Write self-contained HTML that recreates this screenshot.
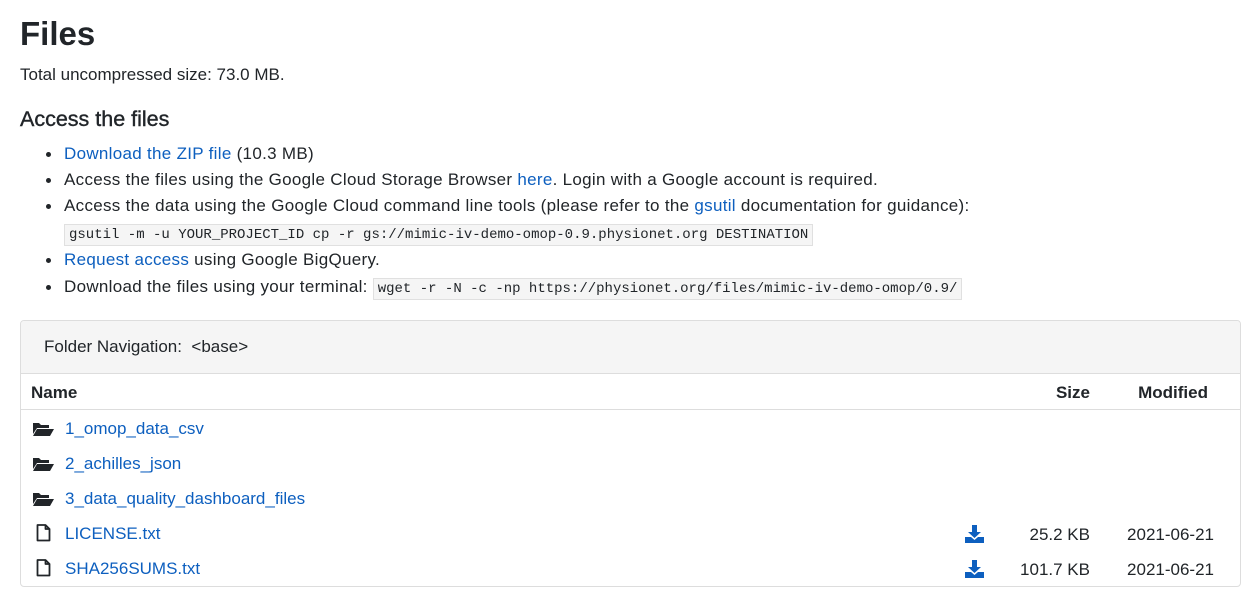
<!DOCTYPE html>
<html><head><meta charset="utf-8"><style>
*{margin:0;padding:0;box-sizing:border-box}
body{width:1251px;height:597px;background:#fff;font-family:"Liberation Sans",sans-serif;color:#212529;font-size:17px;position:relative;overflow:hidden}
.a{position:absolute;white-space:nowrap}
a{color:#0d5fbf;text-decoration:none}
h1{position:absolute;left:20px;top:13px;font-size:33px;font-weight:bold;line-height:42px}
h2{position:absolute;left:20px;top:106px;font-size:21.5px;font-weight:normal;line-height:26px;-webkit-text-stroke:0.4px #212529}
.li{position:absolute;left:64px;white-space:nowrap;line-height:20px;letter-spacing:0.3px}
.li:before{content:"";position:absolute;left:-18px;top:8px;width:5px;height:5px;border-radius:50%;background:#212529}
code{font-family:"Liberation Mono",monospace;font-size:14px;background:#f5f5f5;border:1px solid #e0e0e0;padding:2px 4px;color:#212529;letter-spacing:0}
.card{position:absolute;left:20px;top:320px;width:1221px;height:267px;border:1px solid #ddd;border-radius:4px;overflow:hidden}
.hd{height:53px;background:#f5f5f5;border-bottom:1px solid #ddd;padding:17px 0 0 23px;line-height:18px}
.th{position:absolute;top:53px;left:0;right:0;height:36px;border-bottom:1px solid #ddd;font-weight:bold;font-size:17px}
.row{position:absolute;left:0;right:0;height:35px}
.row a{position:absolute;left:44px;top:8px;font-size:17px}
.fold{position:absolute;left:12px;top:11px}
.file{position:absolute;left:15px;top:8px}
.dl{position:absolute;left:944px;top:9px}
.sz{position:absolute;right:150px;top:9px}
.dt{position:absolute;right:26px;top:9px}
</style></head><body>
<h1>Files</h1>
<div class="a" style="left:20px;top:65px;line-height:20px">Total uncompressed size: 73.0 MB.</div>
<h2>Access the files</h2>
<div class="li" style="top:144px"><a>Download the ZIP file</a> (10.3 MB)</div>
<div class="li" style="top:170px">Access the files using the Google Cloud Storage Browser <a>here</a>. Login with a Google account is required.</div>
<div class="li" style="top:196px">Access the data using the Google Cloud command line tools (please refer to the <a>gsutil</a> documentation for guidance):</div>
<div class="a" style="left:64px;top:223px"><code>gsutil -m -u YOUR_PROJECT_ID cp -r gs://mimic-iv-demo-omop-0.9.physionet.org DESTINATION</code></div>
<div class="li" style="top:250px"><a>Request access</a> using Google BigQuery.</div>
<div class="li" style="top:277px">Download the files using your terminal: <code>wget -r -N -c -np https://physionet.org/files/mimic-iv-demo-omop/0.9/</code></div>
<div class="card">
<div class="hd">Folder Navigation: &nbsp;&lt;base&gt;</div>
<div class="th"><span class="a" style="left:10px;top:9px">Name</span><span class="a" style="right:150px;top:9px">Size</span><span class="a" style="right:32px;top:9px">Modified</span></div>
<div class="row" style="top:90px"><svg class="fold" width="21" height="14" viewBox="0 0 21 14"><path d="M0 1h6l2 2h8v3H4L0 12z M4 7h17l-4 7H0z" fill="#212529"/></svg><a>1_omop_data_csv</a></div>
<div class="row" style="top:125px"><svg class="fold" width="21" height="14" viewBox="0 0 21 14"><path d="M0 1h6l2 2h8v3H4L0 12z M4 7h17l-4 7H0z" fill="#212529"/></svg><a>2_achilles_json</a></div>
<div class="row" style="top:160px"><svg class="fold" width="21" height="14" viewBox="0 0 21 14"><path d="M0 1h6l2 2h8v3H4L0 12z M4 7h17l-4 7H0z" fill="#212529"/></svg><a>3_data_quality_dashboard_files</a></div>
<div class="row" style="top:195px"><svg class="file" width="15" height="18" viewBox="0 0 15 18"><path d="M1.5 1h8l4 4v11.5h-12z M9.5 1v4h4" fill="none" stroke="#212529" stroke-width="1.8" stroke-linejoin="round"/></svg><a>LICENSE.txt</a>
<svg class="dl" width="19" height="18" viewBox="0 0 19 18"><path d="M7 0h5v7h4l-6.5 6L3 7h4z M0 12h6l3.5 3 3.5-3h6v6H0z" fill="#0d5fbf"/></svg><span class="sz">25.2 KB</span><span class="dt">2021-06-21</span></div>
<div class="row" style="top:230px"><svg class="file" width="15" height="18" viewBox="0 0 15 18"><path d="M1.5 1h8l4 4v11.5h-12z M9.5 1v4h4" fill="none" stroke="#212529" stroke-width="1.8" stroke-linejoin="round"/></svg><a>SHA256SUMS.txt</a>
<svg class="dl" width="19" height="18" viewBox="0 0 19 18"><path d="M7 0h5v7h4l-6.5 6L3 7h4z M0 12h6l3.5 3 3.5-3h6v6H0z" fill="#0d5fbf"/></svg><span class="sz">101.7 KB</span><span class="dt">2021-06-21</span></div>
</div>
</body></html>
